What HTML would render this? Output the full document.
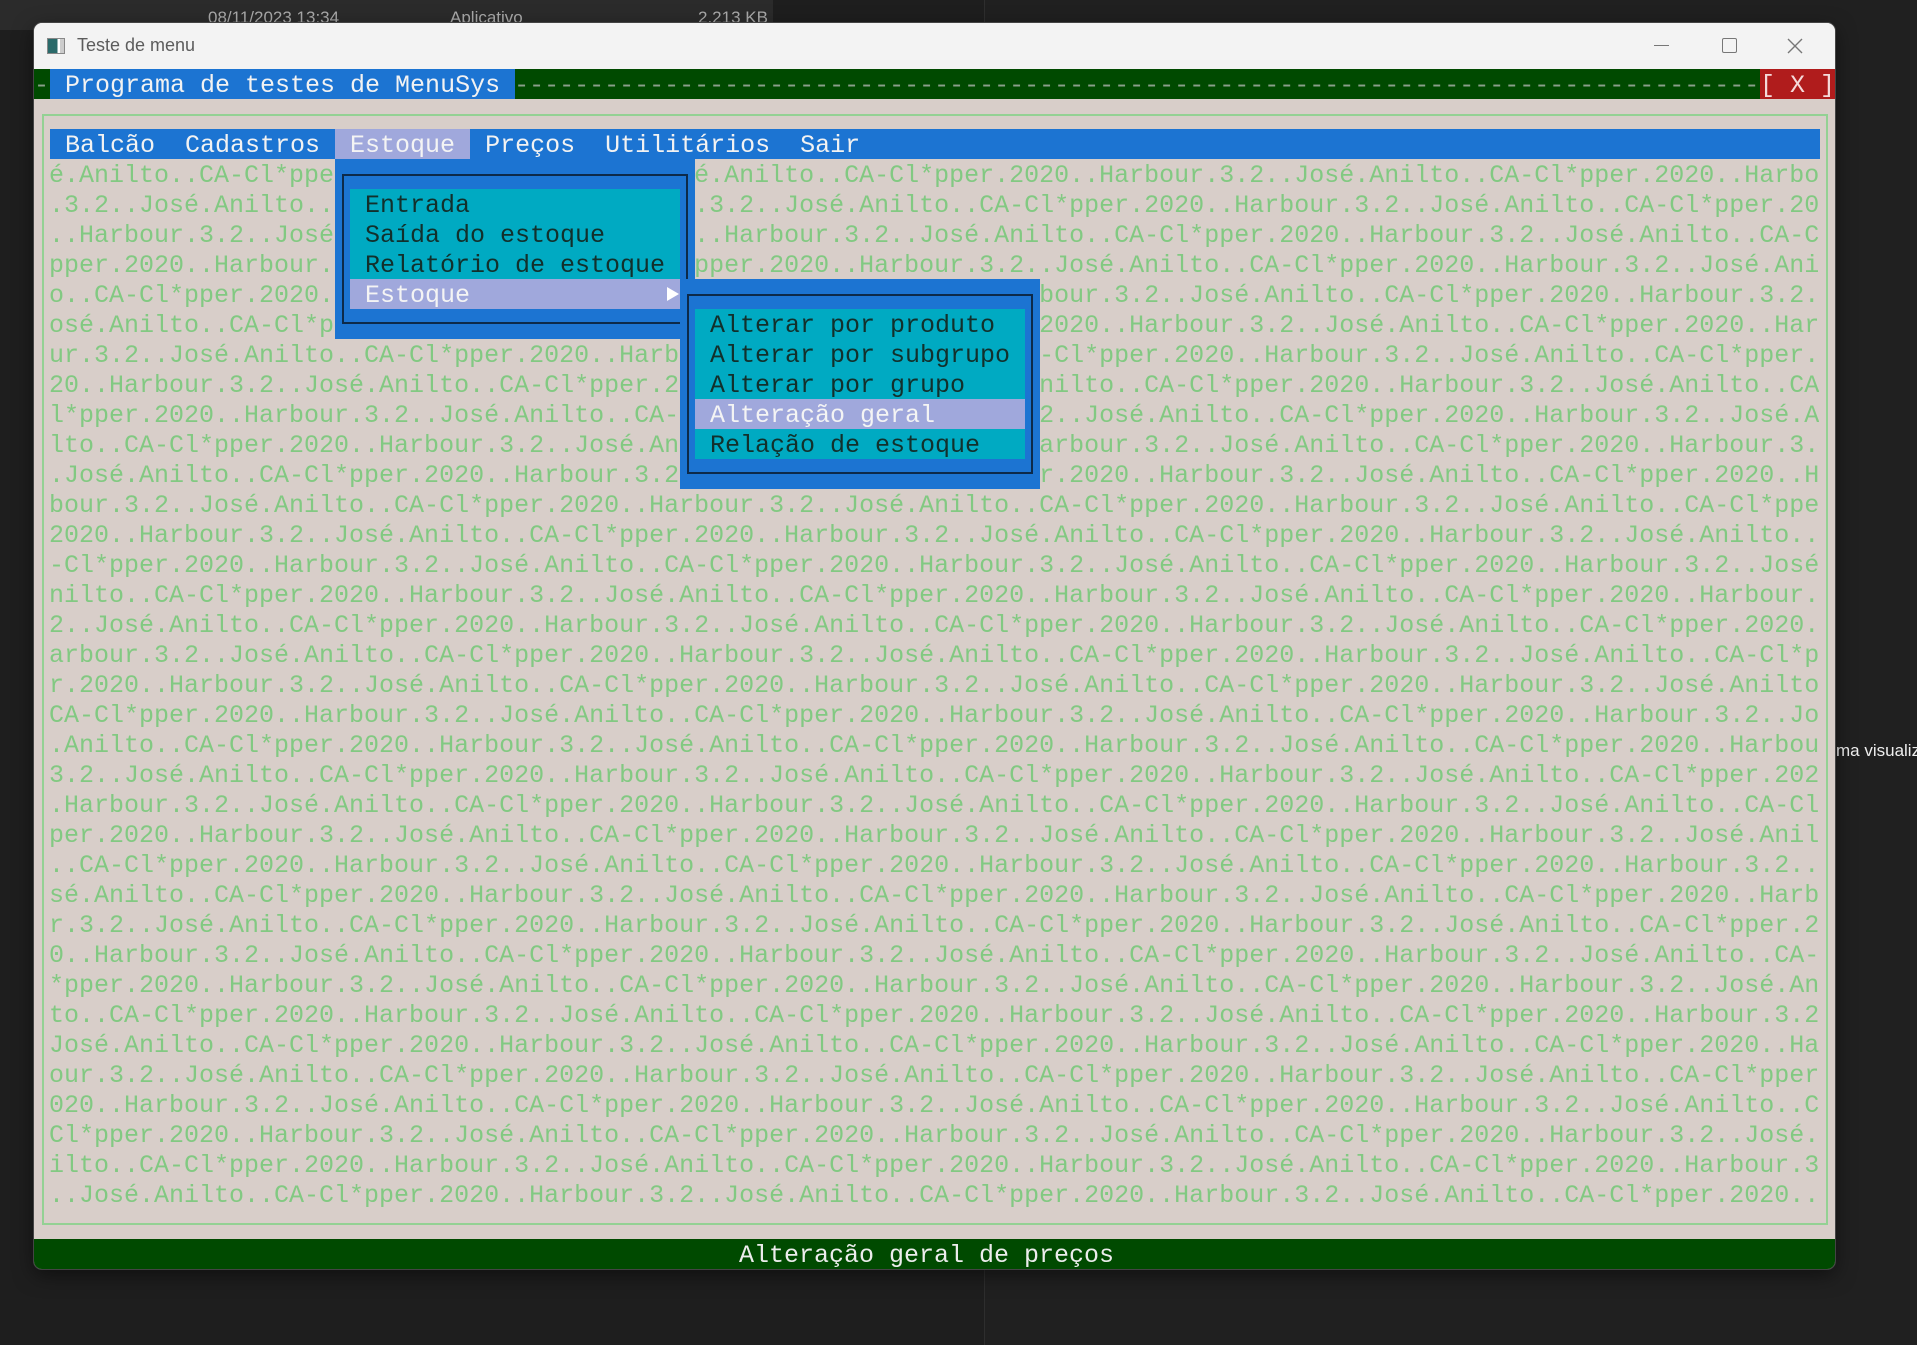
<!DOCTYPE html>
<html><head><meta charset="utf-8">
<style>
*{margin:0;padding:0;box-sizing:border-box}
html,body{width:1917px;height:1345px;overflow:hidden;background:#1e1e1e;font-family:"Liberation Mono",monospace}
.abs{position:absolute}
.m{font-family:"Liberation Mono",monospace;font-size:25px;line-height:30px;white-space:pre;height:30px;padding-top:2px;overflow:hidden}
#win{left:34px;top:23px;width:1801px;height:1246px;border-radius:8px;overflow:hidden;background:#d8cec9;box-shadow:0 0 0 1px #444,0 6px 20px rgba(0,0,0,.5)}
.bgrow{left:15px;width:1770px;overflow:hidden;color:#82c982}
</style></head><body>
<div class="abs" style="left:0;top:0;width:773px;height:30px;background:#2b2b2b"></div>
<div class="abs" style="left:984px;top:0;right:0;height:1345px;background:#202020;border-left:1px solid #2e2e2e"></div>
<div class="abs" style="left:208px;top:8px;color:#aaa;font:17px 'Liberation Sans',sans-serif">08/11/2023 13:34</div>
<div class="abs" style="left:450px;top:8px;color:#aaa;font:17px 'Liberation Sans',sans-serif">Aplicativo</div>
<div class="abs" style="left:698px;top:8px;color:#aaa;font:17px 'Liberation Sans',sans-serif">2.213 KB</div>
<div class="abs" style="left:1836px;top:741px;color:#eee;font:17px 'Liberation Sans',sans-serif;white-space:nowrap">ma visualiz</div>

<div id="win" class="abs">
 <div class="abs" style="left:0;top:0;width:1801px;height:46px;background:#f3f3f3"></div>
 <div class="abs" style="left:13px;top:15px;width:18px;height:16px;border:1px solid #888;background:linear-gradient(90deg,#2a6a6a 0 60%,#fff 60% 75%,#ccc 75%)"></div>
 <div class="abs" style="left:43px;top:12px;color:#5c5c5c;font:18px 'Liberation Sans',sans-serif">Teste de menu</div>
 <div class="abs" style="left:1620px;top:22px;width:15px;height:1px;background:#777"></div>
 <div class="abs" style="left:1688px;top:15px;width:15px;height:15px;border:1.5px solid #777;border-radius:2px"></div>
 <svg class="abs" style="left:1752px;top:14px" width="18" height="18"><path d="M2 2L16 16M16 2L2 16" stroke="#777" stroke-width="1.4"/></svg>

 <div class="abs m" style="left:0;top:46px;width:1801px;background:#004a00;color:#8a9f8a">-                               ----------------------------------------------------------------------------------------</div>
 <div class="abs m" style="left:16px;top:46px;width:465px;background:#1c74d2;color:#f2f2f2"> Programa de testes de MenuSys </div>
 <div class="abs m" style="left:1726px;top:46px;width:75px;background:#b01c1c;color:#f5dada">[ X ]</div>

 <div class="abs" style="left:8px;top:91px;width:1786px;height:1111px;border:2px solid #93d193"></div>

 <div class="abs m" style="left:16px;top:106px;width:1770px;background:#1c74d2;color:#f2f2f2"> Balcão  Cadastros  Estoque  Preços  Utilitários  Sair</div>
 <div class="abs m" style="left:301px;top:106px;width:135px;background:#a0a8dc;color:#f4f4f4"> Estoque </div>

 <div id="rows" class="abs" style="left:0;top:136px"></div>

 <div class="abs" style="left:301px;top:136px;width:360px;height:180px;background:#1c74d2"></div>
 <div class="abs" style="left:308px;top:151px;width:346px;height:150px;border:2px solid #0d2a4a"></div>
 <div class="abs m" style="left:316px;top:166px;width:330px;background:#00aac2;color:#12302c"> Entrada</div>
 <div class="abs m" style="left:316px;top:196px;width:330px;background:#00aac2;color:#12302c"> Saída do estoque</div>
 <div class="abs m" style="left:316px;top:226px;width:330px;background:#00aac2;color:#12302c"> Relatório de estoque</div>
 <div class="abs m" style="left:316px;top:256px;width:330px;background:#a0a8dc;color:#f4f4f4"> Estoque</div>
 <svg class="abs" style="left:632px;top:263px" width="14" height="16"><path d="M1 1L13 8L1 15Z" fill="#fff"/></svg>

 <div class="abs" style="left:646px;top:256px;width:360px;height:210px;background:#1c74d2"></div>
 <div class="abs" style="left:653px;top:271px;width:346px;height:180px;border:2px solid #0d2a4a"></div>
 <div class="abs m" style="left:661px;top:286px;width:330px;background:#00aac2;color:#12302c"> Alterar por produto</div>
 <div class="abs m" style="left:661px;top:316px;width:330px;background:#00aac2;color:#12302c"> Alterar por subgrupo</div>
 <div class="abs m" style="left:661px;top:346px;width:330px;background:#00aac2;color:#12302c"> Alterar por grupo</div>
 <div class="abs m" style="left:661px;top:376px;width:330px;background:#a0a8dc;color:#f4f4f4"> Alteração geral</div>
 <div class="abs m" style="left:661px;top:406px;width:330px;background:#00aac2;color:#12302c"> Relação de estoque</div>

 <div class="abs m" style="left:0;top:1216px;width:1801px;height:30px;background:#004a00;color:#ececec;padding-left:705px">Alteração geral de preços</div>
</div>
<script>
(function(){
 var p="José.Anilto..CA-Cl*pper.2020..Harbour.3.2..";
 var s=p+p+p+p+p;
 var offs=[3,37,28,19,10,1,35,26,17,8,42,33,24,15,6,40,31,22,13,4,38,29,20,11,2,36,27,18,9,0,34,25,16,7,41];
 var h='';
 for(var i=0;i<offs.length;i++){
  h+='<div class="abs m bgrow" style="top:'+(i*30)+'px">'+s.substr(offs[i],118)+'</div>';
 }
 document.getElementById('rows').innerHTML=h;
})();
</script>
</body></html>
